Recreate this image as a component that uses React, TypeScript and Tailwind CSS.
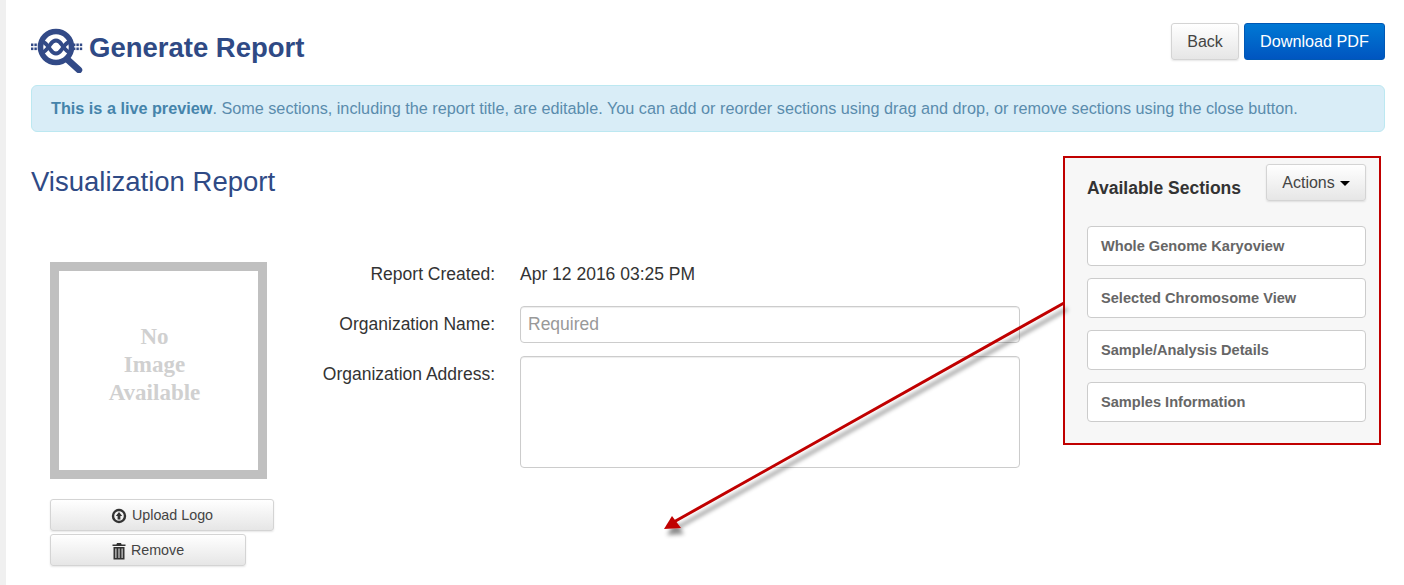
import React from 'react'

const sans = '[font-family:"Liberation_Sans",Arial,sans-serif]'

function Logo() {
  return (
    <svg width="52" height="46" viewBox="0 0 52 46" className="mt-[2px] shrink-0">
      <g fill="#324a87">
        {[0, 3.4, 6.8].map((x) => (
          <React.Fragment key={x}>
            <rect x={x} y="16.500" width="2.400" height="2.600" />
            <rect x={x} y="20.500" width="2.400" height="2.600" />
            <rect x={x + 42} y="16.500" width="2.400" height="2.600" />
            <rect x={x + 42} y="20.500" width="2.400" height="2.600" />
          </React.Fragment>
        ))}
      </g>
      <path d="M10 14.500C14 14.500 15 17 17.500 20S21 26.500 25 26.500 30 23 32.500 20 36 14.500 40 14.500" fill="none" stroke="#324a87" strokeWidth="3.800" />
      <path d="M10 25.500C14 25.500 15 23 17.500 20S21 13.500 25 13.500 30 17 32.500 20 36 25.500 40 25.500" fill="none" stroke="#324a87" strokeWidth="3.800" />
      <circle cx="25" cy="20" r="15.500" fill="none" stroke="#324a87" strokeWidth="5.500" />
      <path d="M37 33l11 10" stroke="#324a87" strokeWidth="6.500" strokeLinecap="round" />
    </svg>
  )
}

function GrayButton({ className, children }: { className: string; children: React.ReactNode }) {
  return (
    <button className={`flex items-center justify-center rounded-[3px] border border-[#d4d4d4] bg-gradient-to-b from-white to-[#e6e6e6] text-[#444] shadow-[0_1px_2px_rgba(0,0,0,0.1)] ${className}`}>
      {children}
    </button>
  )
}

const sections = ['Whole Genome Karyoview', 'Selected Chromosome View', 'Sample/Analysis Details', 'Samples Information']

export default function App() {
  return (
    <div className={`relative h-[585px] w-[1404px] overflow-hidden border-l-[6px] border-[#f0f0f0] bg-white pl-[25px] pr-[19px] ${sans}`}>
      <div className="flex h-[85px] items-start justify-between pt-[23px]">
        <div className="flex h-[46px] items-start gap-[6px] pt-[2px]">
          <Logo />
          <h1 className="mt-[4px] text-[27.5px] font-bold leading-[38px] text-[#2f4a85]">Generate Report</h1>
        </div>
        <div className="flex gap-[5px]">
          <GrayButton className="h-[37px] w-[68px] text-[16px]">Back</GrayButton>
          <button className="h-[37px] w-[141px] rounded-[3px] border border-[#0058b5] bg-gradient-to-b from-[#0078d4] to-[#0055c0] text-[16.2px] text-white">Download PDF</button>
        </div>
      </div>

      <div className="flex h-[47px] items-center rounded-[6px] border border-[#bce8f1] bg-[#d9edf7] pl-[19px] text-[16.23px] text-[#5a8cad]">
        <span><b className="text-[#4584ab]">This is a live preview</b>. Some sections, including the report title, are editable. You can add or reorder sections using drag and drop, or remove sections using the close button.</span>
      </div>

      <div className="flex justify-between pr-[4px] pt-[24px]">
        <div className="flex flex-col pt-[1px]">
          <h2 className="text-[27.5px] leading-[50px] text-[#2f4a85]">Visualization Report</h2>
          <div className="flex pt-[55px]">
            <div className="ml-[19px] flex w-[224px] flex-col">
              <div className="flex h-[217px] w-[217px] flex-col items-center justify-center border-[9px] border-[#c0c0c0] pb-[12px] pr-[8px] font-['Liberation_Serif',serif] text-[23px] font-bold leading-[28px] text-[#d0d0d0]">
                <span>No</span>
                <span>Image</span>
                <span>Available</span>
              </div>
              <GrayButton className="mt-[20px] h-[32px] w-[224px] gap-[5px] pt-[1px] text-[14.3px]">
                <svg width="16" height="16" viewBox="0 0 16 16">
                  <circle cx="8" cy="8" r="6" fill="none" stroke="#333" strokeWidth="2.400" />
                  <path d="M8 4L11.200 8H9.400v3.500H6.600V8H4.800z" fill="#333" />
                </svg>
                Upload Logo
              </GrayButton>
              <GrayButton className="mt-[3px] h-[32px] w-[196px] gap-[5px] pt-[1px] text-[14.3px]">
                <svg width="14" height="18" viewBox="0 0 14 18">
                  <path fill="#333" d="M5 1h4l.6 1.500H13.500V4H.5V2.500h3.900zM1.500 5h11v12.500h-11zM3.400 6.500V16h1V6.500zM6.500 6.500V16h1V6.500zM9.600 6.500V16h1V6.500z" fillRule="evenodd" />
                </svg>
                Remove
              </GrayButton>
            </div>
            <div className="ml-[16px] flex flex-col text-[17.5px] text-[#333]">
              <div className="flex h-[24px] items-center">
                <span className="w-[230px] pr-[25px] text-right">Report Created:</span>
                <span>Apr 12 2016 03:25 PM</span>
              </div>
              <div className="mt-[20px] flex">
                <span className="w-[230px] pt-[5px] pr-[25px] text-right">Organization Name:</span>
                <input readOnly placeholder="Required" className="h-[37px] w-[500px] rounded-[4px] border border-[#ccc] px-[7px] text-[17.5px] shadow-[inset_0_1px_1px_rgba(0,0,0,0.075)] outline-none placeholder:text-[#999]" />
              </div>
              <div className="mt-[13px] flex">
                <span className="w-[230px] pt-[5px] pr-[25px] text-right">Organization Address:</span>
                <div className="h-[112px] w-[500px] rounded-[4px] border border-[#ccc] shadow-[inset_0_1px_1px_rgba(0,0,0,0.075)]" />
              </div>
            </div>
          </div>
        </div>

        <div className="h-[289px] w-[318px] border-[2px] border-[#c00000] bg-[#f7f7f7] pl-[22px] pr-[13px]">
          <div className="flex h-[68px] items-start justify-between pt-[6px]">
            <span className="pt-[11px] text-[17.5px] font-bold text-[#333]">Available Sections</span>
            <GrayButton className="h-[37px] w-[100px] gap-[5px] text-[16px]">
              Actions
              <span className="mt-[2px] border-x-[5px] border-t-[5px] border-x-transparent border-t-black" />
            </GrayButton>
          </div>
          <div className="flex flex-col gap-[12px]">
            {sections.map((section) => (
              <div key={section} className="flex h-[40px] items-center rounded-[4px] border border-[#ccc] bg-white pl-[13px] pt-[1px] text-[14.6px] font-bold text-[#666]">{section}</div>
            ))}
          </div>
        </div>
      </div>

      {/* annotation arrow over the form */}
      <svg className="absolute left-[-6px] top-0 pointer-events-none" width="1404" height="585" viewBox="0 0 1404 585">
        <defs>
          <filter id="arrowShadow" x="-10%" y="-10%" width="120%" height="130%">
            <feDropShadow dx="3" dy="6" stdDeviation="2" floodColor="#000" floodOpacity="0.45" />
          </filter>
        </defs>
        <g filter="url(#arrowShadow)">
          <path d="M1064 303L672 523" stroke="#c00000" strokeWidth="3" />
          <path d="M664 529L672 516L681 528Z" fill="#c00000" />
        </g>
      </svg>
    </div>
  )
}
